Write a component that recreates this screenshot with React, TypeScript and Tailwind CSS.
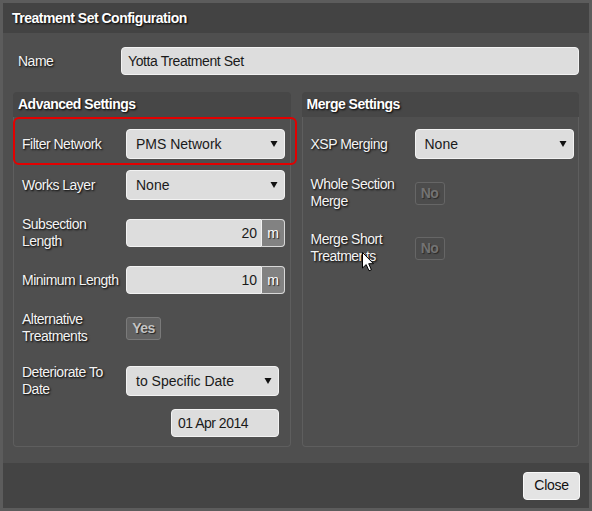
import React from "react";

const shadow = "[text-shadow:1px_1px_2px_#000]";

function Arrow() {
  return (
    <svg width="8" height="7" viewBox="0 0 8 7" className="absolute right-[6px] top-1/2 -translate-y-1/2">
      <polygon points="0.5,0.5 7.5,0.5 4,6.5" fill="#111" />
    </svg>
  );
}

function Select({ value, w }: { value: string; w: string }) {
  return (
    <div className={`relative flex h-[30px] ${w} items-center rounded-[4px] border border-[#f2f2f2] bg-[#dddddd] pl-[9px] text-[14px] text-[#1a1a1a]`}>
      {value}
      <Arrow />
    </div>
  );
}

function Label({ children, w = "w-[104px]" }: { children: React.ReactNode; w?: string }) {
  return (
    <div className={`${w} shrink-0 text-[14px] leading-[17px] tracking-[-0.5px] text-[#f4f4f4] [text-shadow:1px_1px_2px_#000]`}>
      {children}
    </div>
  );
}

function NumInput({ value }: { value: string }) {
  return (
    <div className="flex h-[28px] w-[159px]">
      <div className="flex flex-1 items-center justify-end rounded-l-[4px] border border-[#f2f2f2] bg-[#dddddd] pr-[4px] text-[14px] text-[#1a1a1a]">
        {value}
      </div>
      <div className="flex w-[23px] items-center justify-center rounded-r-[4px] border border-l-0 border-[#d8d8d8] bg-[#828282] text-[14px] text-white [text-shadow:1px_1px_1px_#222]">
        m
      </div>
    </div>
  );
}

function Toggle({ on }: { on: boolean }) {
  return on ? (
    <div className="flex h-[23px] w-[35px] items-center justify-center rounded-[3px] border border-[#7a7a7a] bg-[#626262] text-[14px] font-bold tracking-[-0.5px] text-[#c4c4c4] [text-shadow:1px_1px_1px_#222]">
      Yes
    </div>
  ) : (
    <div className="flex h-[23px] w-[30px] items-center justify-center rounded-[3px] border border-[#666] bg-[#4c4c4c] text-[14px] font-bold tracking-[-0.5px] text-[#737373] [text-shadow:1px_1px_1px_#2a2a2a]">
      No
    </div>
  );
}

function Fieldset({ title, children }: { title: string; children: React.ReactNode }) {
  return (
    <div className="flex flex-col">
      <div className={`flex h-[25px] items-center rounded-t-[4px] bg-[#474747] pl-[5px] text-[14px] font-bold tracking-[-0.5px] text-white ${shadow}`}>
        {title}
      </div>
      <div className="relative flex flex-1 flex-col rounded-b-[4px] border border-t-0 border-[#5e5e5e] pl-[8px]">
        {children}
      </div>
    </div>
  );
}

export default function App() {
  return (
    <div className="relative h-[511px] w-[592px] bg-[#5c5c5c] p-[3px] font-['Liberation_Sans',Arial,sans-serif]">
      <div className="flex h-full flex-col bg-[#4f4f4f]">
        <div className={`flex h-[30px] shrink-0 items-center bg-[#434343] pl-[9px] text-[14px] font-bold tracking-[-0.5px] text-white ${shadow}`}>
          Treatment Set Configuration
        </div>
        <div className="flex flex-1 flex-col px-[10px] pb-[16px]">
          <div className="mt-[14px] flex h-[28px] items-center">
            <div className="w-[108px] shrink-0 pl-[5px] text-[14px] tracking-[-0.5px] text-[#f4f4f4] [text-shadow:1px_1px_2px_#000]">Name</div>
            <div className="flex h-[28px] flex-1 items-center rounded-[4px] border border-[#f2f2f2] bg-[#dddddd] pl-[6px] text-[14px] tracking-[-0.4px] text-[#1a1a1a]">
              Yotta Treatment Set
            </div>
          </div>
          <div className="mt-[17px] grid flex-1 grid-cols-2 gap-[11px]">
            <Fieldset title="Advanced Settings">
              <div className="relative mt-[12px] flex h-[30px] items-center">
                <Label>Filter Network</Label>
                <Select value="PMS Network" w="w-[159px]" />
                <div className="pointer-events-none absolute left-[-9px] right-[-7px] top-[-12px] bottom-[-6px] rounded-[6px] border-2 border-[#e30000]" />
              </div>
              <div className="mt-[11px] flex h-[30px] items-center">
                <Label>Works Layer</Label>
                <Select value="None" w="w-[159px]" />
              </div>
              <div className="mt-[16px] flex h-[34px] items-center">
                <Label>Subsection Length</Label>
                <NumInput value="20" />
              </div>
              <div className="mt-[16px] flex h-[28px] items-center">
                <Label>Minimum Length</Label>
                <NumInput value="10" />
              </div>
              <div className="mt-[17px] flex h-[34px] items-center">
                <Label>Alternative Treatments</Label>
                <Toggle on />
              </div>
              <div className="mt-[19px] flex h-[34px] items-center">
                <Label>Deteriorate To Date</Label>
                <Select value="to Specific Date" w="w-[153px]" />
              </div>
              <div className="mt-[11px] flex h-[28px] items-center">
                <div className="w-[149px] shrink-0" />
                <div className="flex h-[28px] w-[108px] items-center rounded-[4px] border border-[#f2f2f2] bg-[#dddddd] pl-[6px] text-[14px] tracking-[-0.5px] text-[#1a1a1a]">
                  01 Apr 2014
                </div>
              </div>
            </Fieldset>
            <Fieldset title="Merge Settings">
              <div className="mt-[12px] flex h-[30px] items-center">
                <Label>XSP Merging</Label>
                <Select value="None" w="w-[159px]" />
              </div>
              <div className="mt-[17px] flex h-[34px] items-center">
                <Label>Whole Section Merge</Label>
                <Toggle on={false} />
              </div>
              <div className="mt-[21px] flex h-[34px] items-center">
                <Label>Merge Short Treatments</Label>
                <Toggle on={false} />
              </div>
            </Fieldset>
          </div>
        </div>
        <div className="flex h-[45px] shrink-0 items-center justify-end bg-[#444444] pr-[9px]">
          <div className="flex h-[28px] w-[57px] items-center justify-center rounded-[4px] border border-[#f8f8f8] bg-[#e4e4e4] text-[14px] tracking-[-0.3px] text-[#111]">
            Close
          </div>
        </div>
      </div>
      <svg width="13" height="20" viewBox="0 0 13 20" className="absolute left-[362px] top-[252px]">
        <path d="M0.5,0.5 L0.5,16 L4.2,12.6 L7,18.8 L9.4,17.8 L6.7,11.7 L11.5,11.7 Z" fill="#fff" stroke="#000" strokeWidth="1" strokeLinejoin="miter" />
      </svg>
    </div>
  );
}
